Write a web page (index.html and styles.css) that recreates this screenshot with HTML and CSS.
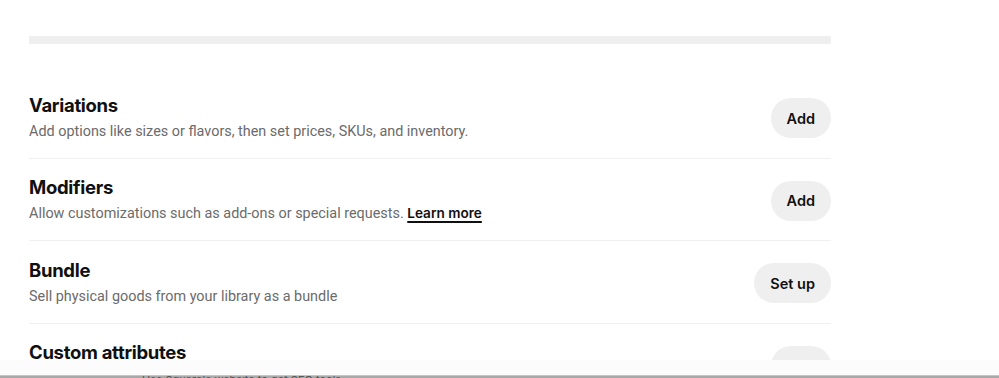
FILE: index.html
```html
<!DOCTYPE html>
<html>
<head>
<meta charset="utf-8">
<link rel="stylesheet" href="styles.css">
</head>
<body>
<div class="viewport">
  <div class="content">
    <div class="progress"></div>
    <div class="rows">
      <div class="row">
        <div class="text">
          <div class="title">Variations</div>
          <div class="desc">Add options like sizes or flavors, then set prices, SKUs, and inventory.</div>
        </div>
        <button class="btn">Add</button>
      </div>
      <div class="row">
        <div class="text">
          <div class="title">Modifiers</div>
          <div class="desc">Allow customizations such as add-ons or special requests. <a class="link">Learn more</a></div>
        </div>
        <button class="btn">Add</button>
      </div>
      <div class="row">
        <div class="text">
          <div class="title">Bundle</div>
          <div class="desc">Sell physical goods from your library as a bundle</div>
        </div>
        <button class="btn">Set up</button>
      </div>
      <div class="row">
        <div class="text">
          <div class="title">Custom attributes</div>
          <div class="desc">Add custom fields to store extra item information.</div>
        </div>
        <button class="btn">Add</button>
      </div>
    </div>
  </div>
  <div class="fade"></div>
  <div class="taskbar"><span class="taskbar-text">Use Square's website to get SEO tools</span></div>
</div>
</body>
</html>
```
FILE: styles.css
```css
* { box-sizing: border-box; }
html, body { margin: 0; padding: 0; background: #fff; }
body {
  font-family: Inter, "Noto Sans", "Liberation Sans", sans-serif;
  color: #1a1a1a;
  width: 999px;
  height: 378px;
  overflow: hidden;
}
.viewport {
  display: flex;
  flex-direction: column;
  height: 378px;
}
.content {
  height: 360px;
  overflow: hidden;
  padding: 36px 0 0 29px;
  width: 831px;
  flex: none;
}
.progress {
  height: 8px;
  width: 802px;
  background: #efefef;
  border-radius: 1px;
}
.rows {
  margin-top: 32px;
  width: 802px;
}
.row {
  display: flex;
  align-items: center;
  justify-content: space-between;
  padding: 16.5px 0 14px;
  border-bottom: 1px solid #f0f0f0;
}
.text { display: flex; flex-direction: column; }
.title {
  font-size: 18.5px;
  font-weight: 650;
  line-height: 24px;
  color: #101010;
  letter-spacing: -0.3px;
}
.desc {
  font-family: Roboto, "Liberation Sans", sans-serif;
  font-size: 14.4px;
  line-height: 24px;
  height: 24px;
  margin-top: 3px;
  color: #6b6b6b;
}
.link {
  font-family: Inter, "Noto Sans", sans-serif;
  font-size: 13.6px;
  line-height: 1;
  color: #101010;
  font-weight: 600;
  text-decoration: underline;
  text-underline-offset: 3px;
  text-decoration-thickness: 2px;
}
.btn {
  border: none;
  background: #efefef;
  border-radius: 20px;
  height: 40px;
  padding: 0 16px;
  font-family: inherit;
  font-size: 14.5px;
  font-weight: 600;
  color: #101010;
}
.fade {
  height: 15px;
  background: #fcfcfc;
  flex: none;
}
.taskbar {
  height: 3px;
  flex: none;
  background: #a9a9a9;
  border-top: 1px solid #c4c4c4;
  overflow: hidden;
  padding-left: 142px;
}
.taskbar-text {
  display: block;
  font-size: 11px;
  line-height: 11px;
  color: #555;
  margin-top: -1px;
}
```
